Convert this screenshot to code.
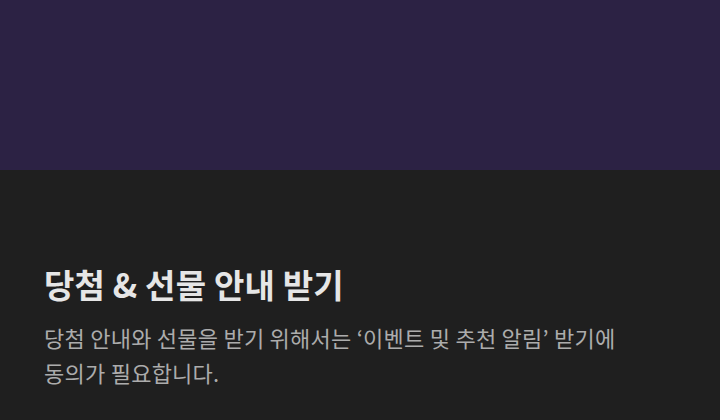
export default function App() {
  return (
    <div className="w-[720px] h-[420px] overflow-hidden bg-[#1f1f1f] font-['Noto_Sans_CJK_KR','Noto_Sans',sans-serif]">
      {/* Top banner */}
      <div className="h-[170px] bg-[#2c2244]" />

      {/* Consent copy */}
      <div className="px-[44px] pt-[92px]">
        <h2 className="text-[33px] leading-[44px] font-semibold tracking-[0.2px] text-[#e6e6e6]">
          당첨 &amp; 선물 안내 받기
        </h2>
        <p className="mt-[14px] text-[22px] leading-[35px] tracking-[0.25px] text-[#acacac]">
          당첨 안내와 선물을 받기 위해서는 ‘이벤트 및 추천 알림’ 받기에
          <br />
          동의가 필요합니다.
        </p>
      </div>
    </div>
  );
}
